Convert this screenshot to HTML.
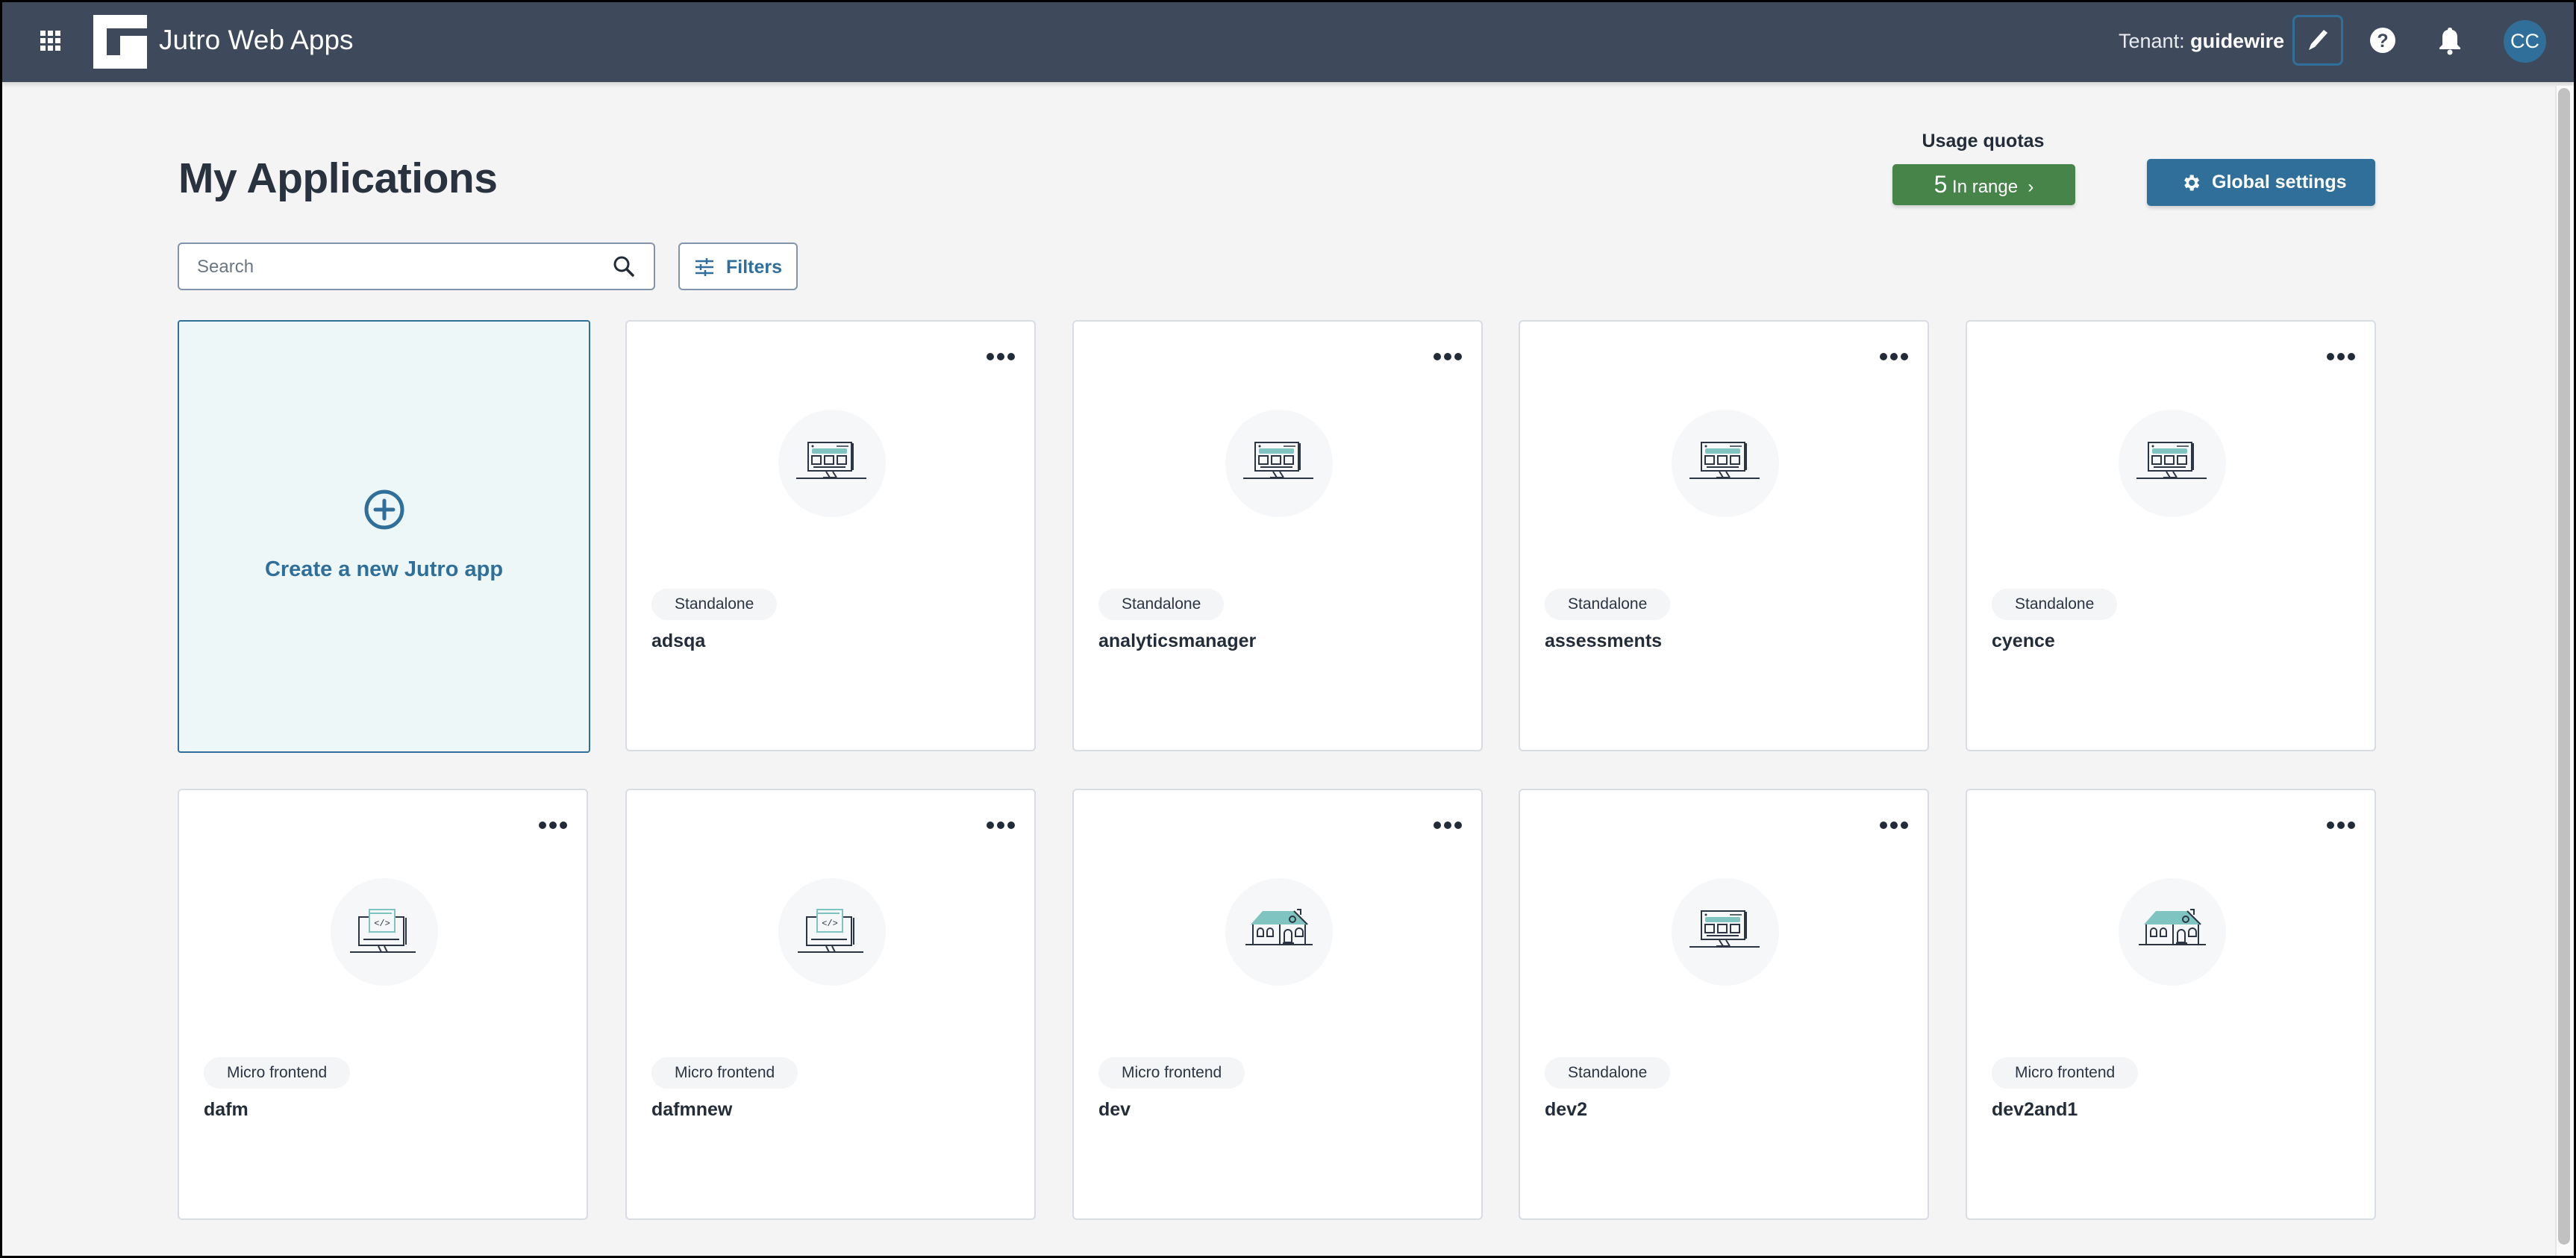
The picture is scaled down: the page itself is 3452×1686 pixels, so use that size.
<!DOCTYPE html>
<html><head><meta charset="utf-8"><style>
*{box-sizing:border-box;margin:0;padding:0}
body{width:3452px;height:1686px;background:#000;font-family:"Liberation Sans",sans-serif;overflow:hidden;position:relative}
#page{position:absolute;left:3px;top:3px;width:3446px;height:1680px;background:#f4f4f4;overflow:hidden}
#hdr{position:absolute;left:0;top:0;width:100%;height:107px;background:#3e4a5b;box-shadow:0 3px 6px rgba(0,0,0,.15)}
.abs{position:absolute}
.card{position:absolute;width:550px;height:578px;background:#fff;border:2px solid #d8dde3;border-radius:6px}
.dots{position:absolute;left:482px;top:42px;width:40px;height:12px}
.dots i{position:absolute;top:0;width:10px;height:10px;border-radius:50%;background:#222c38}
.circ{position:absolute;left:203px;top:118px;width:144px;height:144px;border-radius:50%;background:#f6f7f9}
.circ svg{position:absolute;left:22px;top:22px}
.tag{position:absolute;left:33px;top:358px;height:42px;padding:0 31px;border-radius:21px;background:#f3f5f7;color:#2b3543;font-size:21px;line-height:42px}
.name{position:absolute;left:33px;top:414px;font-size:25px;font-weight:bold;color:#232d39}
</style></head><body><div id="page">
<div id="hdr">
 <svg class="abs" style="left:50px;top:37px" width="30" height="30" viewBox="0 0 30 30" fill="#fff"><rect x="1" y="1" width="7" height="7"/><rect x="11" y="1" width="7" height="7"/><rect x="21" y="1" width="7" height="7"/><rect x="1" y="11" width="7" height="7"/><rect x="11" y="11" width="7" height="7"/><rect x="21" y="11" width="7" height="7"/><rect x="1" y="21" width="7" height="7"/><rect x="11" y="21" width="7" height="7"/><rect x="21" y="21" width="7" height="7"/></svg>
 <svg class="abs" style="left:122px;top:17px" width="72" height="72" viewBox="0 0 72 72" fill="#fff"><path d="M0 0H72V18H18V54H36V28H72V72H50V46H54V72H0Z"/></svg>
 <div class="abs" style="left:210px;top:30px;font-size:37px;color:#fff">Jutro Web Apps</div>
 <div class="abs" style="left:2836px;top:37px;font-size:27px;color:#e8ecf0">Tenant: <b style="color:#fff">guidewire</b></div>
 <div class="abs" style="left:3069px;top:17px;width:68px;height:68px;border:3px solid #2f6f99;border-radius:8px"></div>
 <svg class="abs" style="left:3087px;top:34px" width="32" height="34" viewBox="0 0 32 34"><path d="M4 30 L7 22 L24 3 L29 7 L12 26 Z" fill="#fff"/></svg>
 <svg class="abs" style="left:3172px;top:33px" width="36" height="36" viewBox="0 0 36 36"><circle cx="18" cy="18" r="17" fill="#fff"/><text x="18" y="27" text-anchor="middle" font-family="Liberation Sans" font-weight="bold" font-size="25" fill="#3e4a5b">?</text></svg>
 <svg class="abs" style="left:3264px;top:32px" width="32" height="40" viewBox="0 0 32 40" fill="#fff"><path d="M16 2c2 0 3 1 3 3 5 1 7 5 7 10v10l4 4v2H2v-2l4-4V15c0-5 2-9 7-10 0-2 1-3 3-3z"/><circle cx="16" cy="35" r="3.5"/></svg>
 <div class="abs" style="left:3352px;top:24px;width:57px;height:57px;border-radius:50%;background:#2f6f99;color:#fff;font-size:27px;line-height:57px;text-align:center">CC</div>
</div>
<div class="abs" style="left:3421px;top:112px;width:25px;height:1568px;background:#fafafa;border-left:2px solid #e6e6e6"></div>
<div class="abs" style="left:3425px;top:115px;width:16px;height:1550px;background:#c1c1c1;border-radius:8px"></div>

<div class="abs" style="left:236px;top:203px;font-size:57px;font-weight:bold;color:#29323f;letter-spacing:-0.5px">My Applications</div>
<div class="abs" style="left:2532px;top:172px;width:245px;text-align:center;font-size:25px;font-weight:bold;color:#232d39">Usage quotas</div>
<div class="abs" style="left:2533px;top:217px;width:245px;height:55px;background:#46844a;border-radius:5px;color:#fff;text-align:center;line-height:55px;font-size:24px;box-shadow:0 3px 5px rgba(0,0,0,.15)"><span style="font-size:32px">5</span> In range &nbsp;›</div>
<div class="abs" style="left:2874px;top:210px;width:306px;height:63px;background:#2f6f99;border-radius:5px;color:#fff;line-height:63px;font-size:25px;font-weight:bold;box-shadow:0 3px 5px rgba(0,0,0,.15)">
 <svg class="abs" style="left:45px;top:18px" width="28" height="28" viewBox="0 0 24 24"><path fill="#fff" d="M19.4 13a7.5 7.5 0 000-2l2.1-1.6-2-3.5-2.5 1a7 7 0 00-1.7-1L15 3h-4l-.4 2.9a7 7 0 00-1.7 1l-2.5-1-2 3.5L6.6 11a7.5 7.5 0 000 2l-2.1 1.6 2 3.5 2.5-1a7 7 0 001.7 1L11 21h4l.4-2.9a7 7 0 001.7-1l2.5 1 2-3.5zM13 15.5a3.5 3.5 0 110-7 3.5 3.5 0 010 7z"/></svg>
 <span style="position:absolute;left:87px">Global settings</span></div>

<div class="abs" style="left:235px;top:322px;width:640px;height:64px;background:#fff;border:2px solid #8294ad;border-radius:6px">
 <span class="abs" style="left:24px;top:17px;font-size:24px;color:#6b7684">Search</span>
 <svg class="abs" style="left:580px;top:14px" width="32" height="32" viewBox="0 0 32 32"><circle cx="13" cy="13" r="9" fill="none" stroke="#222c38" stroke-width="3"/><path d="M20 20l8 8" stroke="#222c38" stroke-width="3.5" stroke-linecap="round"/></svg>
</div>
<div class="abs" style="left:906px;top:322px;width:160px;height:64px;background:#fff;border:2px solid #8294ad;border-radius:6px;color:#2f6f99;font-size:25px;font-weight:bold">
 <svg class="abs" style="left:20px;top:18px" width="26" height="26" viewBox="0 0 26 26" stroke="#2f6f99" stroke-width="2.5"><path d="M1 5h24M1 13h24M1 21h24"/><path d="M16 1v8M8 9v8M14 17v8"/></svg>
 <span class="abs" style="left:62px;top:17px">Filters</span></div>

<div class="abs" style="left:235px;top:426px;width:553px;height:580px;background:#eef7f7;border:2px solid #2f6f99;border-radius:4px">
 <svg class="abs" style="left:247px;top:224px" width="56" height="56" viewBox="0 0 56 56"><circle cx="28" cy="28" r="24" fill="none" stroke="#2f6f99" stroke-width="5"/><path d="M28 16v24M16 28h24" stroke="#2f6f99" stroke-width="5" stroke-linecap="round"/></svg>
 <div class="abs" style="left:0;width:100%;top:316px;text-align:center;color:#2f6f99;font-size:29px;font-weight:bold">Create a new Jutro app</div>
</div>

<svg width="0" height="0" style="position:absolute"><defs>
<g id="mon"><rect x="18" y="22" width="58" height="38" fill="none" stroke="#2b3543" stroke-width="2"/><path d="M78 23v36" stroke="#2b3543" stroke-width="2"/><circle cx="24" cy="27" r="1.5" fill="#2b3543"/><path d="M56 27h16" stroke="#2b3543" stroke-width="1.5"/><rect x="23" y="30" width="47" height="7" rx="2" fill="#7fc4c0"/><rect x="23" y="40" width="12" height="11" fill="none" stroke="#2b3543" stroke-width="2"/><rect x="40" y="40" width="12" height="11" fill="none" stroke="#2b3543" stroke-width="2"/><rect x="57" y="40" width="12" height="11" fill="none" stroke="#2b3543" stroke-width="2"/><path d="M25 55h43M42 61l5 8M51 61l5 8M38 69h18M2 70h94" stroke="#2b3543" stroke-width="2"/></g>
<g id="code"><rect x="16" y="30" width="60" height="38" fill="none" stroke="#2b3543" stroke-width="2"/><path d="M79 31v36M22 60h48" stroke="#2b3543" stroke-width="2"/><rect x="30" y="20" width="34" height="30" fill="#f6f7f9" stroke="#7fc4c0" stroke-width="2"/><path d="M30 25h30" stroke="#7fc4c0" stroke-width="2"/><text x="47" y="42" text-anchor="middle" font-size="12" font-family="Liberation Mono" fill="#2b3543">&lt;/&gt;</text><path d="M42 69l4 8M50 69l4 8M38 77h18M4 77h88" stroke="#2b3543" stroke-width="2"/></g>
<g id="house"><path d="M12 40 L28 22 H70 L88 40 Z" fill="#7fc4c0"/><path d="M70 22 L88 40" stroke="#2b3543" stroke-width="2"/><path d="M74 20h5v7" stroke="#2b3543" stroke-width="2" fill="none"/><circle cx="68" cy="33" r="4" fill="none" stroke="#2b3543" stroke-width="2"/><path d="M15 40v27M51 40v27M85 40v27M5 67h90" stroke="#2b3543" stroke-width="2"/><path d="M21 56v-7a4 4 0 018 0v7zM34 56v-7a4 4 0 018 0v7zM57 64v-12a5 5 0 0110 0v12zM72 56v-6a5 5 0 0110 0v6z" fill="none" stroke="#2b3543" stroke-width="2"/><path d="M55 65h15" stroke="#2b3543" stroke-width="2"/></g>
</defs></svg>

<div class="card" style="left:835px;top:426px"><div class="dots"><i style="left:0"></i><i style="left:14px"></i><i style="left:28px"></i></div><div class="circ"><svg width="100" height="100" viewBox="0 0 100 100"><use href="#mon"/></svg></div><div class="tag">Standalone</div><div class="name">adsqa</div></div>
<div class="card" style="left:1434px;top:426px"><div class="dots"><i style="left:0"></i><i style="left:14px"></i><i style="left:28px"></i></div><div class="circ"><svg width="100" height="100" viewBox="0 0 100 100"><use href="#mon"/></svg></div><div class="tag">Standalone</div><div class="name">analyticsmanager</div></div>
<div class="card" style="left:2032px;top:426px"><div class="dots"><i style="left:0"></i><i style="left:14px"></i><i style="left:28px"></i></div><div class="circ"><svg width="100" height="100" viewBox="0 0 100 100"><use href="#mon"/></svg></div><div class="tag">Standalone</div><div class="name">assessments</div></div>
<div class="card" style="left:2631px;top:426px"><div class="dots"><i style="left:0"></i><i style="left:14px"></i><i style="left:28px"></i></div><div class="circ"><svg width="100" height="100" viewBox="0 0 100 100"><use href="#mon"/></svg></div><div class="tag">Standalone</div><div class="name">cyence</div></div>

<div class="card" style="left:235px;top:1054px"><div class="dots"><i style="left:0"></i><i style="left:14px"></i><i style="left:28px"></i></div><div class="circ"><svg width="100" height="100" viewBox="0 0 100 100"><use href="#code"/></svg></div><div class="tag">Micro frontend</div><div class="name">dafm</div></div>
<div class="card" style="left:835px;top:1054px"><div class="dots"><i style="left:0"></i><i style="left:14px"></i><i style="left:28px"></i></div><div class="circ"><svg width="100" height="100" viewBox="0 0 100 100"><use href="#code"/></svg></div><div class="tag">Micro frontend</div><div class="name">dafmnew</div></div>
<div class="card" style="left:1434px;top:1054px"><div class="dots"><i style="left:0"></i><i style="left:14px"></i><i style="left:28px"></i></div><div class="circ"><svg width="100" height="100" viewBox="0 0 100 100"><use href="#house"/></svg></div><div class="tag">Micro frontend</div><div class="name">dev</div></div>
<div class="card" style="left:2032px;top:1054px"><div class="dots"><i style="left:0"></i><i style="left:14px"></i><i style="left:28px"></i></div><div class="circ"><svg width="100" height="100" viewBox="0 0 100 100"><use href="#mon"/></svg></div><div class="tag">Standalone</div><div class="name">dev2</div></div>
<div class="card" style="left:2631px;top:1054px"><div class="dots"><i style="left:0"></i><i style="left:14px"></i><i style="left:28px"></i></div><div class="circ"><svg width="100" height="100" viewBox="0 0 100 100"><use href="#house"/></svg></div><div class="tag">Micro frontend</div><div class="name">dev2and1</div></div>
</div></body></html>
